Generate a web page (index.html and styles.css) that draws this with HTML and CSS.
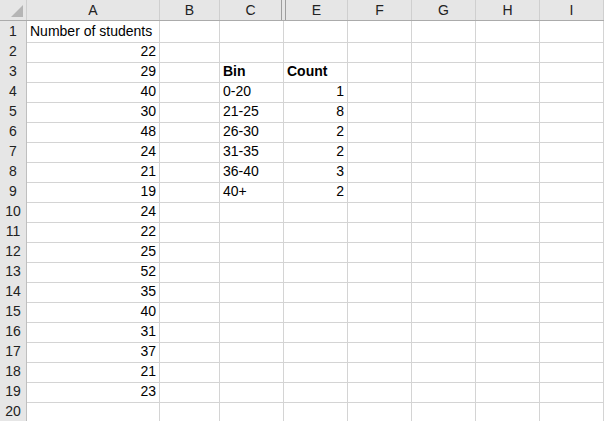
FILE: index.html
```html
<!DOCTYPE html>
<html lang="en">
  <head>
    <meta charset="UTF-8" />
    <title>Bins</title>
    <link rel="stylesheet" href="styles.css">
  </head>
  <body>
    <div class="sheet">
      <div class="head">
        <div class="corner"><span class="tri"></span></div>
        <div class="ch col-a">A</div>
        <div class="ch col-b">B</div>
        <div class="ch col-c">C</div>
        <div class="ch col-d"></div>
        <div class="ch col-e">E</div>
        <div class="ch">F</div>
        <div class="ch">G</div>
        <div class="ch">H</div>
        <div class="ch">I</div>
      </div>

      <div class="row"><div class="rh">1</div><div class="c">Number of students</div><div class="c"></div><div class="c"></div><div class="c"></div><div class="c"></div><div class="c"></div><div class="c"></div><div class="c"></div></div>
      <div class="row"><div class="rh">2</div><div class="c num">22</div><div class="c"></div><div class="c"></div><div class="c"></div><div class="c"></div><div class="c"></div><div class="c"></div><div class="c"></div></div>
      <div class="row"><div class="rh">3</div><div class="c num">29</div><div class="c"></div><div class="c bold">Bin</div><div class="c bold">Count</div><div class="c"></div><div class="c"></div><div class="c"></div><div class="c"></div></div>
      <div class="row"><div class="rh">4</div><div class="c num">40</div><div class="c"></div><div class="c">0-20</div><div class="c num">1</div><div class="c"></div><div class="c"></div><div class="c"></div><div class="c"></div></div>
      <div class="row"><div class="rh">5</div><div class="c num">30</div><div class="c"></div><div class="c">21-25</div><div class="c num">8</div><div class="c"></div><div class="c"></div><div class="c"></div><div class="c"></div></div>
      <div class="row"><div class="rh">6</div><div class="c num">48</div><div class="c"></div><div class="c">26-30</div><div class="c num">2</div><div class="c"></div><div class="c"></div><div class="c"></div><div class="c"></div></div>
      <div class="row"><div class="rh">7</div><div class="c num">24</div><div class="c"></div><div class="c">31-35</div><div class="c num">2</div><div class="c"></div><div class="c"></div><div class="c"></div><div class="c"></div></div>
      <div class="row"><div class="rh">8</div><div class="c num">21</div><div class="c"></div><div class="c">36-40</div><div class="c num">3</div><div class="c"></div><div class="c"></div><div class="c"></div><div class="c"></div></div>
      <div class="row"><div class="rh">9</div><div class="c num">19</div><div class="c"></div><div class="c">40+</div><div class="c num">2</div><div class="c"></div><div class="c"></div><div class="c"></div><div class="c"></div></div>
      <div class="row"><div class="rh">10</div><div class="c num">24</div><div class="c"></div><div class="c"></div><div class="c"></div><div class="c"></div><div class="c"></div><div class="c"></div><div class="c"></div></div>
      <div class="row"><div class="rh">11</div><div class="c num">22</div><div class="c"></div><div class="c"></div><div class="c"></div><div class="c"></div><div class="c"></div><div class="c"></div><div class="c"></div></div>
      <div class="row"><div class="rh">12</div><div class="c num">25</div><div class="c"></div><div class="c"></div><div class="c"></div><div class="c"></div><div class="c"></div><div class="c"></div><div class="c"></div></div>
      <div class="row"><div class="rh">13</div><div class="c num">52</div><div class="c"></div><div class="c"></div><div class="c"></div><div class="c"></div><div class="c"></div><div class="c"></div><div class="c"></div></div>
      <div class="row"><div class="rh">14</div><div class="c num">35</div><div class="c"></div><div class="c"></div><div class="c"></div><div class="c"></div><div class="c"></div><div class="c"></div><div class="c"></div></div>
      <div class="row"><div class="rh">15</div><div class="c num">40</div><div class="c"></div><div class="c"></div><div class="c"></div><div class="c"></div><div class="c"></div><div class="c"></div><div class="c"></div></div>
      <div class="row"><div class="rh">16</div><div class="c num">31</div><div class="c"></div><div class="c"></div><div class="c"></div><div class="c"></div><div class="c"></div><div class="c"></div><div class="c"></div></div>
      <div class="row"><div class="rh">17</div><div class="c num">37</div><div class="c"></div><div class="c"></div><div class="c"></div><div class="c"></div><div class="c"></div><div class="c"></div><div class="c"></div></div>
      <div class="row"><div class="rh">18</div><div class="c num">21</div><div class="c"></div><div class="c"></div><div class="c"></div><div class="c"></div><div class="c"></div><div class="c"></div><div class="c"></div></div>
      <div class="row"><div class="rh">19</div><div class="c num">23</div><div class="c"></div><div class="c"></div><div class="c"></div><div class="c"></div><div class="c"></div><div class="c"></div><div class="c"></div></div>
      <div class="row"><div class="rh">20</div><div class="c"></div><div class="c"></div><div class="c"></div><div class="c"></div><div class="c"></div><div class="c"></div><div class="c"></div><div class="c"></div></div>
    </div>
  </body>
</html>
```

FILE: styles.css
```css
body {
  margin: 0;
  background: #fff;
}
.sheet {
  width: 604px;
  font-family: "Liberation Sans", Arial, sans-serif;
  font-size: 14px;
  color: #000;
}

/* column letters */
.head {
  display: flex;
  height: 21px;
  box-sizing: border-box;
  background: #e6e6e6;
  border-bottom: 1px solid #ababab;
}
.corner {
  position: relative;
  width: 27px;
  box-sizing: border-box;
  border-right: 1px solid #cfcfcf;
}
.tri {
  position: absolute;
  right: 3px;
  bottom: 3px;
  width: 0;
  height: 0;
  border-left: 12px solid transparent;
  border-bottom: 12px solid #b5b5b5;
}
.ch {
  width: 64px;
  box-sizing: border-box;
  border-right: 1px solid #cfcfcf;
  text-align: center;
  line-height: 20px;
  color: #222;
}
.col-a {
  width: 133px;
}
.col-b {
  width: 60px;
}
/* hidden column D between C and E */
.col-c {
  width: 62px;
  border-right-color: #9e9e9e;
}
.col-d {
  width: 4px;
  border-right-color: #9e9e9e;
}
.col-e {
  width: 62px;
}

/* cells */
.row {
  display: grid;
  grid-template-columns: 27px 133px 60px 64px 64px 64px 64px 64px 64px;
  height: 20px;
}
.rh {
  background: #e6e6e6;
  border-right: 1px solid #bfbfbf;
  border-bottom: 1px solid #cfcfcf;
  text-align: center;
  line-height: 20px;
  color: #222;
}
.c {
  border-right: 1px solid #d4d4d4;
  border-bottom: 1px solid #d4d4d4;
  padding: 0 3px;
  line-height: 21px;
  white-space: nowrap;
  overflow: visible;
}
.num {
  text-align: right;
}
.bold {
  font-weight: bold;
}
```
